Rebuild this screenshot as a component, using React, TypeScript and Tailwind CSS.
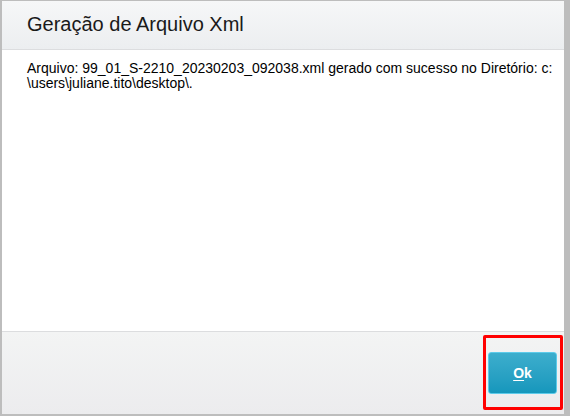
export default function App() {
  return (
    <div className="w-[582px] h-[416px] bg-white font-['Liberation_Sans',Arial,sans-serif]">
      <div className="w-[570px] h-[416px] bg-[#bdbdbd] pl-[2px] pt-px pr-[6px] pb-[2px] flex">
        <div className="flex-1 flex flex-col bg-white">
          <div className="h-[49px] shrink-0 bg-gradient-to-b from-[#f6f7f8] to-[#eceef0] border-b border-[#dcdddf] flex items-center pl-[25px]">
            <h1 className="text-[20px] leading-none text-[#1a1a1a] pb-[2px]">Geração de Arquivo Xml</h1>
          </div>
          <div className="flex-1 px-[25px] pt-[11px] pr-[10px]">
            <p className="text-[14px] leading-[15px] text-black">
              Arquivo: 99_01_S-2210_20230203_092038.xml gerado com sucesso no Diretório: c:<wbr />\users\juliane.tito\desktop\.
            </p>
          </div>
          <div className="relative h-[83px] shrink-0 border-t border-[#dcdddf] bg-gradient-to-b from-[#f3f4f4] to-[#ececee] flex items-center justify-end pr-[7px]">
            <button className="w-[69px] h-[42px] rounded-[3px] border border-[#5ccbea] bg-gradient-to-b from-[#3caecd] to-[#1597bc] text-white text-[14px] font-bold">
              <span className="underline underline-offset-2">O</span>k
            </button>
            <div className="absolute right-[1px] top-[3px] w-[80px] h-[75px] border-[3px] border-[#ff0000] rounded-[2px]" />
          </div>
        </div>
      </div>
    </div>
  );
}
